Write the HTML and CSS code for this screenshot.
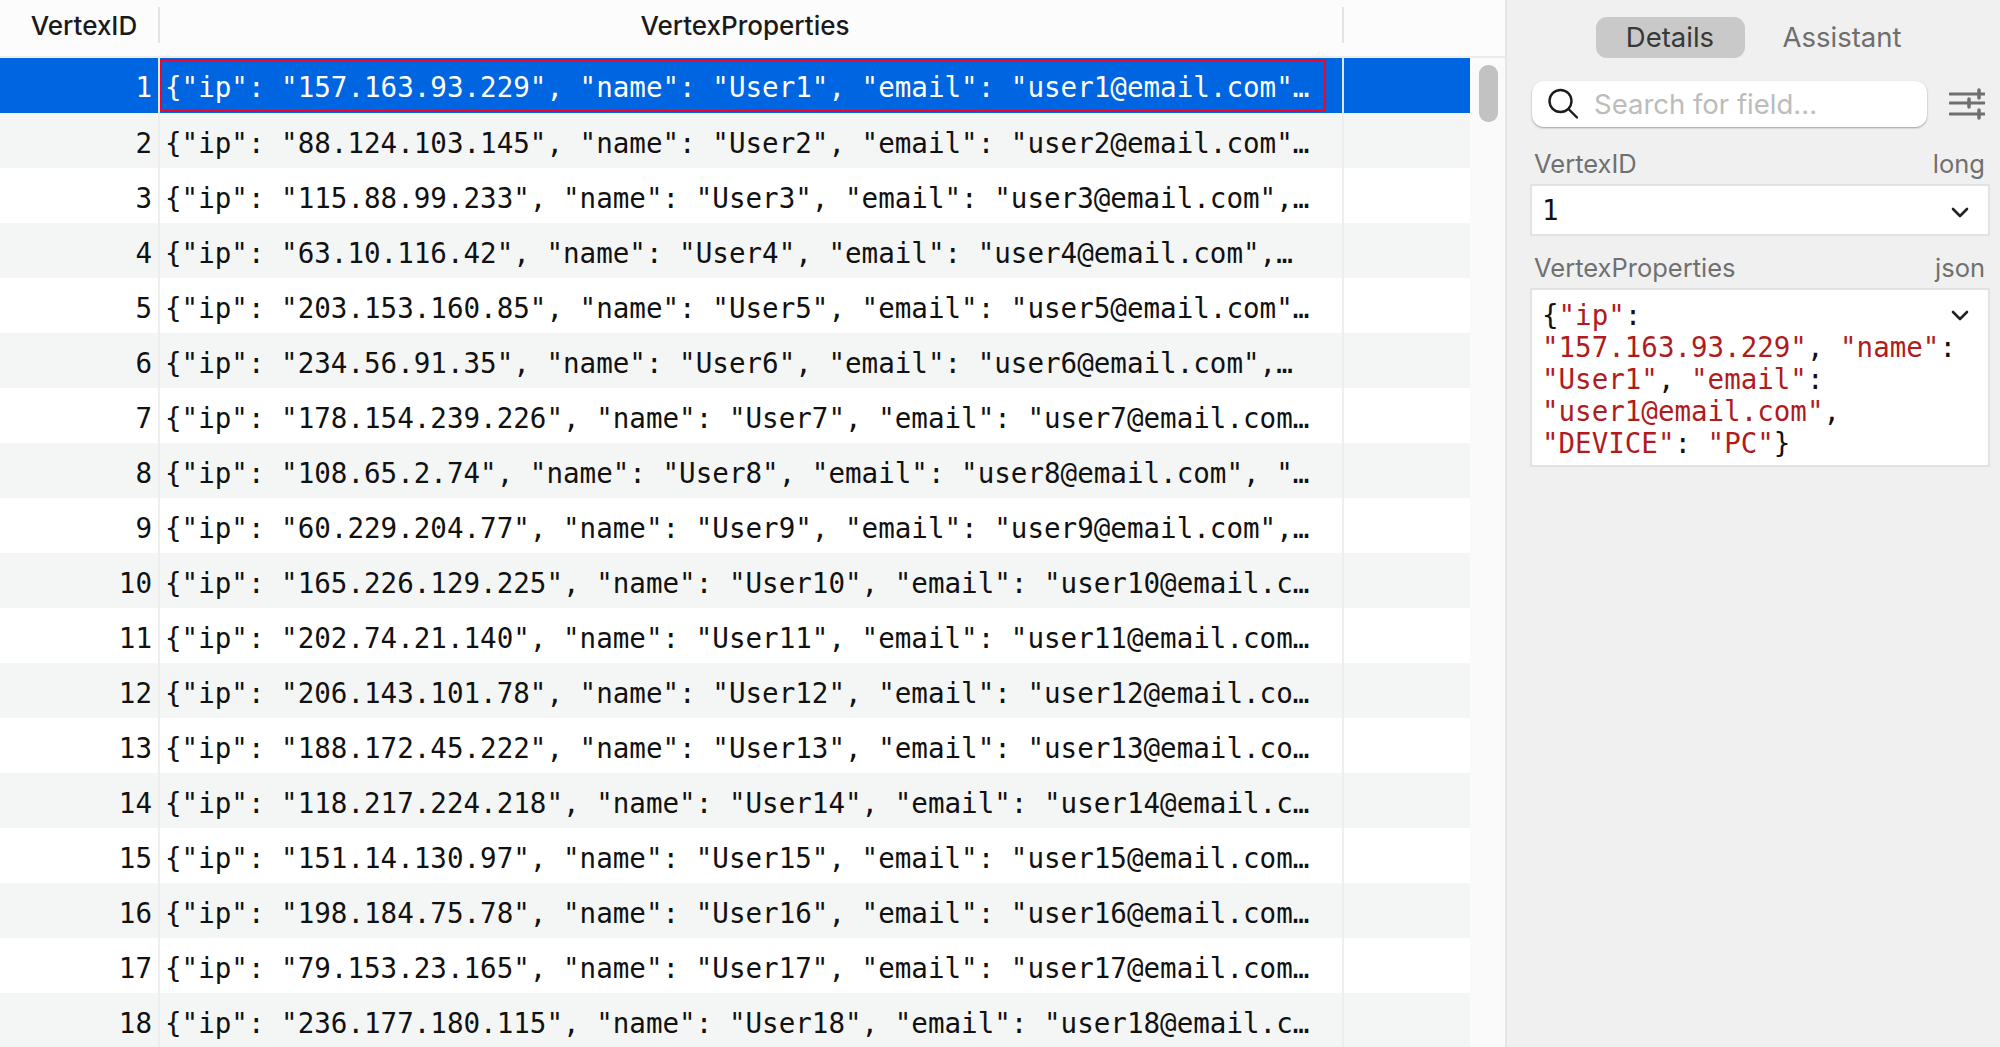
FILE: index.html
```html
<!DOCTYPE html>
<html lang="en">
<head>
  <meta charset="UTF-8" />
  <title>Vertex table</title>
  <link rel="stylesheet" href="styles.css">
</head>
<body>
  <main class="grid-pane">
    <div class="grid-head">
      <div class="col-id">VertexID</div>
      <div class="col-props">VertexProperties</div>
      <div class="col-rest"></div>
    </div>
    <div class="grid-body">
      <div class="rows">
        <div class="row selected"><div class="col-id">1</div><div class="col-props"><span class="cell-focus">{"ip": "157.163.93.229", "name": "User1", "email": "user1@email.com"…</span></div><div class="col-rest"></div></div>
        <div class="row"><div class="col-id">2</div><div class="col-props">{"ip": "88.124.103.145", "name": "User2", "email": "user2@email.com"…</div><div class="col-rest"></div></div>
        <div class="row"><div class="col-id">3</div><div class="col-props">{"ip": "115.88.99.233", "name": "User3", "email": "user3@email.com",…</div><div class="col-rest"></div></div>
        <div class="row"><div class="col-id">4</div><div class="col-props">{"ip": "63.10.116.42", "name": "User4", "email": "user4@email.com",…</div><div class="col-rest"></div></div>
        <div class="row"><div class="col-id">5</div><div class="col-props">{"ip": "203.153.160.85", "name": "User5", "email": "user5@email.com"…</div><div class="col-rest"></div></div>
        <div class="row"><div class="col-id">6</div><div class="col-props">{"ip": "234.56.91.35", "name": "User6", "email": "user6@email.com",…</div><div class="col-rest"></div></div>
        <div class="row"><div class="col-id">7</div><div class="col-props">{"ip": "178.154.239.226", "name": "User7", "email": "user7@email.com…</div><div class="col-rest"></div></div>
        <div class="row"><div class="col-id">8</div><div class="col-props">{"ip": "108.65.2.74", "name": "User8", "email": "user8@email.com", "…</div><div class="col-rest"></div></div>
        <div class="row"><div class="col-id">9</div><div class="col-props">{"ip": "60.229.204.77", "name": "User9", "email": "user9@email.com",…</div><div class="col-rest"></div></div>
        <div class="row"><div class="col-id">10</div><div class="col-props">{"ip": "165.226.129.225", "name": "User10", "email": "user10@email.c…</div><div class="col-rest"></div></div>
        <div class="row"><div class="col-id">11</div><div class="col-props">{"ip": "202.74.21.140", "name": "User11", "email": "user11@email.com…</div><div class="col-rest"></div></div>
        <div class="row"><div class="col-id">12</div><div class="col-props">{"ip": "206.143.101.78", "name": "User12", "email": "user12@email.co…</div><div class="col-rest"></div></div>
        <div class="row"><div class="col-id">13</div><div class="col-props">{"ip": "188.172.45.222", "name": "User13", "email": "user13@email.co…</div><div class="col-rest"></div></div>
        <div class="row"><div class="col-id">14</div><div class="col-props">{"ip": "118.217.224.218", "name": "User14", "email": "user14@email.c…</div><div class="col-rest"></div></div>
        <div class="row"><div class="col-id">15</div><div class="col-props">{"ip": "151.14.130.97", "name": "User15", "email": "user15@email.com…</div><div class="col-rest"></div></div>
        <div class="row"><div class="col-id">16</div><div class="col-props">{"ip": "198.184.75.78", "name": "User16", "email": "user16@email.com…</div><div class="col-rest"></div></div>
        <div class="row"><div class="col-id">17</div><div class="col-props">{"ip": "79.153.23.165", "name": "User17", "email": "user17@email.com…</div><div class="col-rest"></div></div>
        <div class="row"><div class="col-id">18</div><div class="col-props">{"ip": "236.177.180.115", "name": "User18", "email": "user18@email.c…</div><div class="col-rest"></div></div>
      </div>
      <div class="scroll-track"><div class="scroll-thumb"></div></div>
    </div>
  </main>

  <aside class="side">
    <div class="tabs">
      <div class="tab active">Details</div>
      <div class="tab">Assistant</div>
    </div>

    <div class="search-row">
      <div class="search">
        <svg class="search-icon" width="32" height="32" viewBox="0 0 32 32" fill="none" stroke="#1c1c1c" stroke-width="2.4" stroke-linecap="round">
          <circle cx="13.5" cy="13" r="11"/>
          <path d="M21.5 21l8.5 8.5"/>
        </svg>
        <span class="placeholder">Search for field...</span>
      </div>
      <svg class="filter-icon" width="36" height="32" viewBox="0 0 36 32" fill="none" stroke="#6f6f6f" stroke-width="3" stroke-linecap="round">
        <path d="M1 6h34M1 15h34M1 26h34"/>
        <path d="M30 2v8M20 11v8M30 22v8" stroke-width="3.500"/>
      </svg>
    </div>

    <div class="field-head"><span>VertexID</span><span>long</span></div>
    <div class="field">
      <div class="field-value">1</div>
      <svg class="chevron" width="18" height="11" viewBox="0 0 18 11" fill="none" stroke="#222" stroke-width="2.600" stroke-linecap="round" stroke-linejoin="round"><path d="M2 2l7 7 7-7"/></svg>
    </div>

    <div class="field-head"><span>VertexProperties</span><span>json</span></div>
    <div class="field field-json">
      <div class="field-value">{<span class="str">"ip"</span>:<br><span class="str">"157.163.93.229"</span>, <span class="str">"name"</span>:<br><span class="str">"User1"</span>, <span class="str">"email"</span>:<br><span class="str">"user1@email.com"</span>,<br><span class="str">"DEVICE"</span>: <span class="str">"PC"</span>}</div>
      <svg class="chevron" width="18" height="11" viewBox="0 0 18 11" fill="none" stroke="#222" stroke-width="2.600" stroke-linecap="round" stroke-linejoin="round"><path d="M2 2l7 7 7-7"/></svg>
    </div>
  </aside>
</body>
</html>
```

FILE: styles.css
```css
html, body {
  margin: 0;
  height: 100%;
  overflow: hidden;
}

body {
  display: flex;
  background: #fff;
  color: #111;
  font-family: Inter, 'Noto Sans', sans-serif;
}

.grid-pane {
  width: 1505px;
  flex-shrink: 0;
  display: flex;
  flex-direction: column;
}

.grid-head {
  height: 58px;
  box-sizing: border-box;
  padding-bottom: 6px;
  display: flex;
  align-items: center;
  background: #fcfcfc;
  border-bottom: 2px solid #ececec;
  font-size: 26px;
  font-weight: 500;
  color: #1a1a1a;
}

.grid-head .col-id {
  justify-content: center;
  height: 36px;
  padding-left: 10px;
  border-right: 2px solid #e4e4e4;
}

.grid-head .col-props {
  justify-content: center;
  height: 36px;
  padding-right: 12px;
  border-right: 2px solid #e4e4e4;
}

.col-id {
  width: 160px;
  flex-shrink: 0;
  display: flex;
  align-items: center;
  justify-content: flex-end;
  box-sizing: border-box;
}

.col-props {
  width: 1184px;
  flex-shrink: 0;
  display: flex;
  align-items: center;
  box-sizing: border-box;
  white-space: pre;
}

.col-rest {
  flex: 1;
}

.grid-body {
  flex: 1;
  display: flex;
  min-height: 0;
}

.rows {
  width: 1470px;
  flex-shrink: 0;
  font-family: 'DejaVu Sans Mono', monospace;
  font-size: 27.55px;
}

.row {
  height: 55px;
  display: flex;
  background: #fff;
}

.row:nth-child(even) {
  background: #f4f5f5;
}

.row .col-id {
  padding: 5px 6px 0 0;
  border-right: 2px solid #eeeeee;
}

.row .col-props {
  padding: 5px 0 0 5px;
  border-right: 2px solid #eeeeee;
}

.row.selected {
  background: #0065e0;
  color: #fff;
}

.row.selected .col-id,
.row.selected .col-props {
  border-right-color: #d8e6f8;
}

.row.selected .col-id {
  padding-top: 3px;
}

.row.selected .col-props {
  padding: 0 0 0 5px;
}

.cell-focus {
  width: 1166px;
  height: 53px;
  margin-left: -5px;
  padding: 3px 0 0 3px;
  box-sizing: border-box;
  display: flex;
  align-items: center;
  border: 2px solid #f0052a;
}

.scroll-track {
  flex: 1;
  background: #fafafa;
  padding: 7px 7px 0 9px;
}

.scroll-thumb {
  height: 57px;
  background: #c2c2c2;
  border-radius: 9px;
}

.side {
  flex: 1;
  background: #f0f0f0;
  border-left: 2px solid #e6e6e6;
  padding: 17px 10px 0 23px;
}

.tabs {
  display: flex;
  justify-content: center;
  gap: 7px;
  height: 41px;
  padding-left: 8px;
  margin-bottom: 23px;
}

.tab {
  display: flex;
  align-items: center;
  justify-content: center;
  padding: 0 31px 2px;
  font-size: 27.5px;
  color: #6e6e6e;
  border-radius: 11px;
}

.tab.active {
  width: 149px;
  padding: 0 0 2px;
  background: #c9c9c9;
  color: #383838;
}

.search-row {
  display: flex;
  align-items: center;
  justify-content: space-between;
  padding: 0 5px 0 2px;
  margin-bottom: 22px;
}

.search {
  width: 395px;
  height: 46px;
  display: flex;
  align-items: center;
  gap: 15px;
  padding-left: 15px;
  box-sizing: border-box;
  background: #fff;
  border-radius: 12px;
  box-shadow: 0 1px 2px rgba(0, 0, 0, 0.35);
}

.search-icon {
  flex-shrink: 0;
}

.placeholder {
  font-size: 27.5px;
  color: #bcbcbc;
}

.field-head {
  display: flex;
  justify-content: space-between;
  padding: 0 5px 0 4px;
  margin-bottom: 5px;
  font-size: 25.5px;
  line-height: 30px;
  color: #707070;
}

.field {
  position: relative;
  padding: 8px 10px;
  margin-bottom: 17px;
  background: #fff;
  border: 2px solid #e2e2e2;
  font-family: 'DejaVu Sans Mono', monospace;
  font-size: 27.5px;
  line-height: 32px;
  color: #111;
}

.field-json {
  padding: 9px 10px 6px;
}

.str {
  color: #b01c1c;
}

.chevron {
  position: absolute;
  top: 21px;
  right: 19px;
}

.field-json .chevron {
  top: 20px;
}
```
